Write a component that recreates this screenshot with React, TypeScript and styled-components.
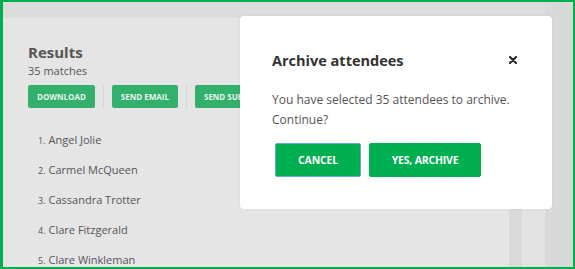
import React from "react";
import styled, { createGlobalStyle } from "styled-components";

const GlobalStyle = createGlobalStyle`
  html, body { margin: 0; padding: 0; background: #fff; }
  body { font-family: "Open Sans", "Liberation Sans", sans-serif; }
`;

const Frame = styled.div`
  position: relative;
  width: 575px;
  height: 269px;
  box-sizing: border-box;
  border: 2px solid #00b050;
  border-left-width: 3px;
  background: #d9d9d9;
  display: flex;
  overflow: hidden;
`;

const Main = styled.div`
  width: 542px;
  display: flex;
  flex-direction: column;
  background: #dcdcdc;
`;

const TopBar = styled.div`
  height: 8px;
  background: #e6e6e6;
  border-bottom-right-radius: 3px;
  margin-bottom: 16px;
`;

const Body = styled.div`
  flex: 1;
  display: flex;
`;

const Card = styled.div`
  width: 506px;
  background: #e5e5e5;
  padding: 24px 0 0 25px;
  box-sizing: border-box;
`;

const Track = styled.div`
  width: 13px;
  background: #dadada;
`;

const Aside = styled.div`
  flex: 1;
  background: #e3e3e3;
`;

const Heading = styled.div`
  font-size: 15px;
  font-weight: 700;
  color: #555;
  line-height: 20px;
`;

const Count = styled.div`
  font-size: 11px;
  color: #555;
  line-height: 16px;
  margin-top: 1px;
`;

const Toolbar = styled.div`
  display: flex;
  align-items: stretch;
  margin-top: 6px;
  height: 23px;
`;

const ToolButton = styled.div`
  background: #33b06c;
  color: #e8f3ec;
  font-size: 8px;
  font-weight: 700;
  border-radius: 2px;
  padding: 0 9px;
  display: flex;
  align-items: center;
  white-space: nowrap;
`;

const Divider = styled.div`
  width: 1px;
  background: #d6d6d6;
  margin: 0 8px;
`;

const List = styled.ol`
  list-style: none;
  margin: 24px 0 0 10px;
  padding: 0;
`;

const Item = styled.li`
  font-size: 11px;
  color: #555;
  height: 30px;
  line-height: 16px;
`;

const Num = styled.span`
  font-size: 9px;
  margin-right: 3px;
`;

const Dialog = styled.div`
  position: absolute;
  left: 237px;
  top: 14px;
  width: 312px;
  height: 193px;
  background: #fff;
  border-radius: 4px;
  box-shadow: 0 0 2px rgba(0, 0, 0, 0.08);
  box-sizing: border-box;
  padding: 32px 32px 0 32px;
`;

const DialogHead = styled.div`
  display: flex;
  justify-content: space-between;
  align-items: center;
  height: 24px;
`;

const DialogTitle = styled.div`
  font-size: 14.5px;
  font-weight: 700;
  color: #333;
`;

const Close = styled.div`
  width: 8px;
  height: 8px;
  margin-right: 3px;
  display: flex;
`;

const Message = styled.p`
  margin: 18px 0 0 0;
  font-size: 12px;
  line-height: 19.5px;
  color: #555;
`;

const Actions = styled.div`
  display: flex;
  gap: 8px;
  margin-top: 14px;
  padding-left: 3px;
`;

const ActionButton = styled.div<{ $focused?: boolean; $w: number }>`
  width: ${(p) => p.$w}px;
  height: 34px;
  box-sizing: border-box;
  background: #00b050;
  color: #fff;
  font-size: 10.5px;
  font-weight: 700;
  border-radius: 2px;
  display: flex;
  align-items: center;
  justify-content: center;
  border: 1px solid ${(p) => (p.$focused ? "#6fa3e8" : "#00b050")};
  letter-spacing: -0.2px;
`;

const names = [
  "Angel Jolie",
  "Carmel McQueen",
  "Cassandra Trotter",
  "Clare Fitzgerald",
  "Clare Winkleman",
];

export default function App() {
  return (
    <>
      <GlobalStyle />
      <Frame>
        <Main>
          <TopBar />
          <Body>
            <Card>
              <Heading>Results</Heading>
              <Count>35 matches</Count>
              <Toolbar>
                <ToolButton>DOWNLOAD</ToolButton>
                <Divider />
                <ToolButton>SEND EMAIL</ToolButton>
                <Divider />
                <ToolButton>SEND SURVEY</ToolButton>
              </Toolbar>
              <List>
                {names.map((n, i) => (
                  <Item key={n}>
                    <Num>{i + 1}.</Num>
                    {n}
                  </Item>
                ))}
              </List>
            </Card>
            <Track />
            <Aside />
          </Body>
        </Main>
        <Dialog>
          <DialogHead>
            <DialogTitle>Archive attendees</DialogTitle>
            <Close>
              <svg width="8" height="8" viewBox="0 0 8 8">
                <path d="M1 1 L7 7 M7 1 L1 7" stroke="#222" strokeWidth="2" strokeLinecap="round" />
              </svg>
            </Close>
          </DialogHead>
          <Message>
            You have selected 35 attendees to archive.
            <br />
            Continue?
          </Message>
          <Actions>
            <ActionButton $focused $w={86}>CANCEL</ActionButton>
            <ActionButton $w={112}>YES, ARCHIVE</ActionButton>
          </Actions>
        </Dialog>
      </Frame>
    </>
  );
}
